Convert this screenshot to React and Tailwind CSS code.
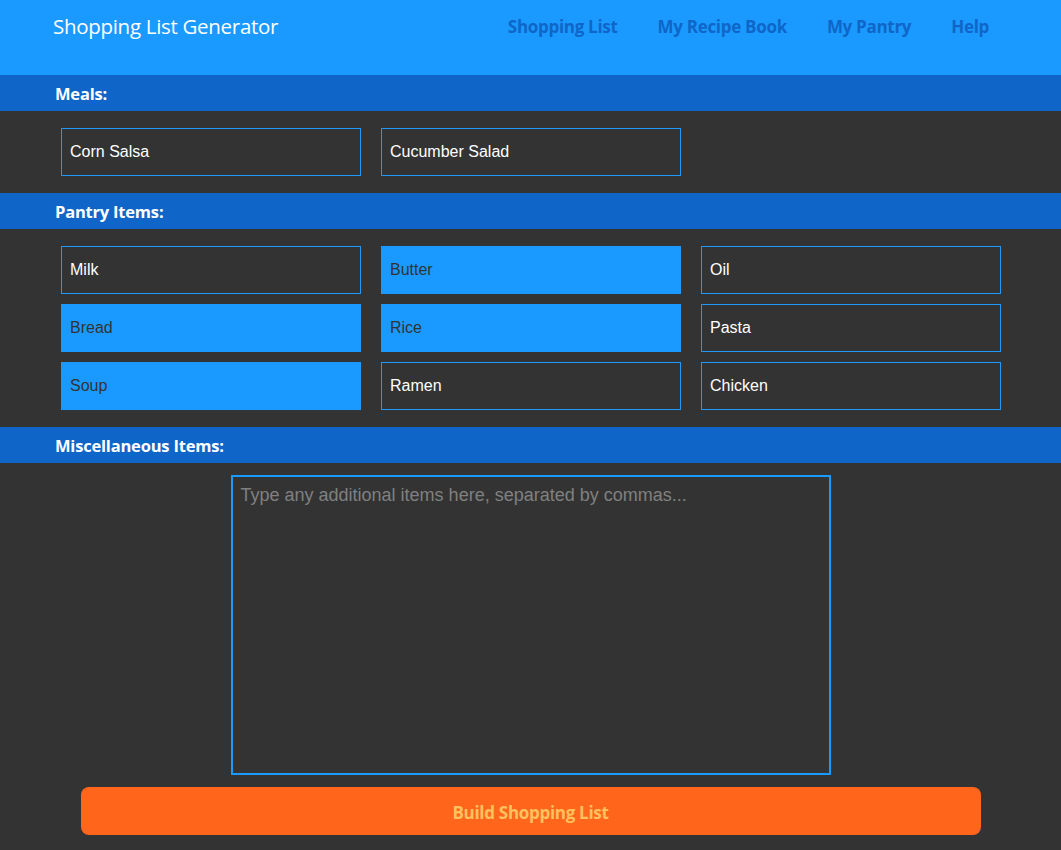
import React from "react";

const futura = { fontFamily: '"Open Sans", "DejaVu Sans", sans-serif' };

function Box({ label, selected }) {
  return (
    <div
      className={
        "h-12 w-[300px] flex items-center pl-2 text-base border " +
        (selected
          ? "bg-[#1a9aff] border-[#1a9aff] text-[#333333]"
          : "bg-[#333333] border-[#1a9aff] text-white")
      }
      style={{ fontFamily: '"Liberation Sans", Arial, sans-serif' }}
    >
      {label}
    </div>
  );
}

function SectionBar({ children }) {
  return (
    <div className="h-9 bg-[#0f66c8] flex items-center pl-[55px] pt-[2px]">
      <span className="text-white font-bold text-[16.5px] tracking-[-0.2px]" style={futura}>
        {children}
      </span>
    </div>
  );
}

export default function App() {
  const pantry = [
    ["Milk", false],
    ["Butter", true],
    ["Oil", false],
    ["Bread", true],
    ["Rice", true],
    ["Pasta", false],
    ["Soup", true],
    ["Ramen", false],
    ["Chicken", false],
  ];
  return (
    <div className="w-[1061px] h-[850px] bg-[#333333] overflow-hidden">
      <header className="h-[75px] bg-[#1a9aff] flex items-start justify-between pl-[53px] pr-[72px] pt-[12px]">
        <div className="text-white text-[20.5px] leading-[28px] tracking-[-0.3px]" style={futura}>
          Shopping List Generator
        </div>
        <nav className="flex gap-[40px] pt-[3px]">
          {["Shopping List", "My Recipe Book", "My Pantry", "Help"].map((n) => (
            <span key={n} className="text-[#0f66c8] font-bold text-[17px] leading-[24px] tracking-[-0.3px]" style={futura}>
              {n}
            </span>
          ))}
        </nav>
      </header>

      <SectionBar>Meals:</SectionBar>
      <div className="flex gap-5 pl-[61px] py-[17px]">
        <Box label="Corn Salsa" />
        <Box label="Cucumber Salad" />
      </div>

      <SectionBar>Pantry Items:</SectionBar>
      <div className="grid grid-cols-[300px_300px_300px] gap-x-5 gap-y-[10px] pl-[61px] py-[17px]">
        {pantry.map(([l, s]) => (
          <Box key={l} label={l} selected={s} />
        ))}
      </div>

      <SectionBar>Miscellaneous Items:</SectionBar>
      <div className="flex flex-col items-center pt-3">
        <textarea
          className="w-[600px] h-[300px] border-2 border-[#1a9aff] bg-[#333333] resize-none px-[8px] py-[5px] text-[18px] text-white placeholder:text-[#808080] outline-none"
          style={{ fontFamily: '"Liberation Sans", Arial, sans-serif' }}
          placeholder="Type any additional items here, separated by commas..."
        />
        <button
          className="mt-3 w-[900px] h-12 rounded-lg bg-[#ff661c] text-[#ffc15e] font-bold text-[17px] tracking-[-0.3px] pt-[3px]"
          style={futura}
        >
          Build Shopping List
        </button>
      </div>
    </div>
  );
}
